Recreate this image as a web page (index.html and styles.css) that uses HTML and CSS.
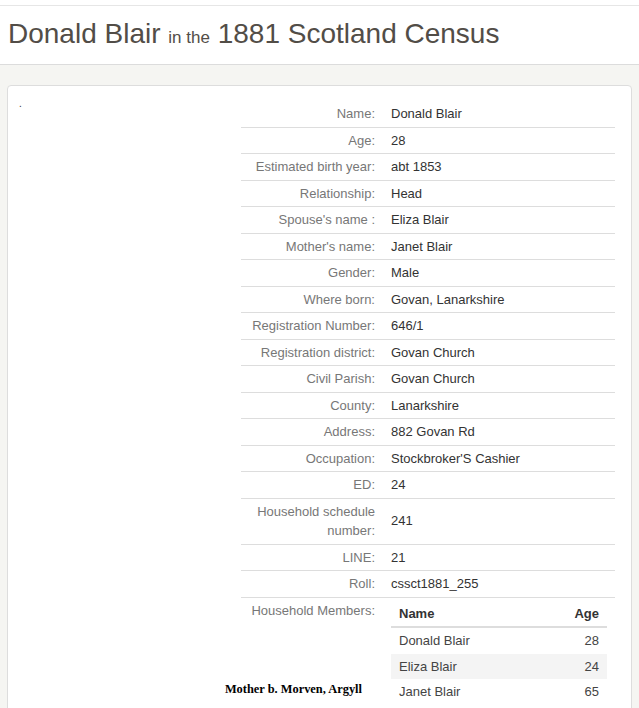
FILE: index.html
```html
<!DOCTYPE html>
<html lang="en">
<head>
<meta charset="utf-8">
<title>Donald Blair in the 1881 Scotland Census</title>
<link rel="stylesheet" href="styles.css">
</head>
<body>
<header class="page-header">
  <h1 class="title">Donald Blair <small class="title-small">in the</small> 1881 Scotland Census</h1>
</header>
<main class="main">
  <section class="card">
    <div class="side"><div class="dot">.</div></div>
    <table class="record">
      <tbody>
        <tr><td class="lbl">Name:</td><td class="val">Donald Blair</td></tr>
        <tr><td class="lbl">Age:</td><td class="val">28</td></tr>
        <tr><td class="lbl">Estimated birth year:</td><td class="val">abt 1853</td></tr>
        <tr><td class="lbl">Relationship:</td><td class="val">Head</td></tr>
        <tr><td class="lbl">Spouse's name :</td><td class="val">Eliza Blair</td></tr>
        <tr><td class="lbl">Mother's name:</td><td class="val">Janet Blair</td></tr>
        <tr><td class="lbl">Gender:</td><td class="val">Male</td></tr>
        <tr><td class="lbl">Where born:</td><td class="val">Govan, Lanarkshire</td></tr>
        <tr><td class="lbl">Registration Number:</td><td class="val">646/1</td></tr>
        <tr><td class="lbl">Registration district:</td><td class="val">Govan Church</td></tr>
        <tr><td class="lbl">Civil Parish:</td><td class="val">Govan Church</td></tr>
        <tr><td class="lbl">County:</td><td class="val">Lanarkshire</td></tr>
        <tr><td class="lbl">Address:</td><td class="val">882 Govan Rd</td></tr>
        <tr><td class="lbl">Occupation:</td><td class="val">Stockbroker'S Cashier</td></tr>
        <tr><td class="lbl">ED:</td><td class="val">24</td></tr>
        <tr><td class="lbl">Household schedule number:</td><td class="val">241</td></tr>
        <tr><td class="lbl">LINE:</td><td class="val">21</td></tr>
        <tr><td class="lbl">Roll:</td><td class="val">cssct1881_255</td></tr>
        <tr>
          <td class="lbl lbl-top">Household Members:<div class="note">Mother b. Morven, Argyll</div></td>
          <td class="val val-nested">
            <table class="members">
              <thead>
                <tr><th class="m-name">Name</th><th class="m-age">Age</th></tr>
              </thead>
              <tbody>
                <tr><td class="m-name">Donald Blair</td><td class="m-age">28</td></tr>
                <tr class="striped"><td class="m-name">Eliza Blair</td><td class="m-age">24</td></tr>
                <tr><td class="m-name">Janet Blair</td><td class="m-age">65</td></tr>
              </tbody>
            </table>
          </td>
        </tr>
      </tbody>
    </table>
  </section>
</main>
</body>
</html>
```

FILE: styles.css
```css
html, body {
  margin: 0;
  padding: 0;
  background: #ffffff;
  font-family: "Liberation Sans", Arial, sans-serif;
}

body {
  padding-top: 5px;
}

.page-header {
  border-top: 1px solid #e6e6e6;
  border-bottom: 1px solid #dcdcdc;
  padding: 12px 8px 15px;
  background: #ffffff;
}

.title {
  margin: 0;
  font-size: 28px;
  line-height: 31px;
  font-weight: normal;
  color: #524d47;
  white-space: nowrap;
}

.title-small {
  font-size: 17px;
  line-height: 1;
}

.main {
  background: #f5f5f2;
  padding: 20px 7px 40px;
}

.card {
  display: flex;
  background: #ffffff;
  border: 1px solid #dddddd;
  border-radius: 4px;
  padding: 15px 16px 20px 11px;
}

.side {
  flex: 1;
}

.dot {
  font-size: 10px;
  line-height: 10px;
  margin-top: -2px;
  color: #333;
}

.record {
  width: 374px;
  border-collapse: collapse;
  font-size: 13px;
  line-height: 19.5px;
}

.record td {
  padding: 3px 0;
  vertical-align: middle;
}

.record tr + tr td {
  border-top: 1px solid #dddddd;
}

.lbl {
  width: 134px;
  padding-right: 6px !important;
  text-align: right;
  color: #777777;
}

.lbl-top {
  vertical-align: top !important;
}

.val {
  padding-left: 10px !important;
  color: #333333;
}

.val-nested {
  vertical-align: top !important;
  padding-right: 8px !important;
}

.note {
  margin-top: 61px;
  margin-left: -20px;
  margin-right: 13px;
  text-align: right;
  white-space: nowrap;
  font-family: "Liberation Serif", "Times New Roman", serif;
  font-weight: bold;
  font-size: 12.4px;
  line-height: 16px;
  color: #000000;
}

.members {
  width: 216px;
  border-collapse: collapse;
  font-size: 13px;
  line-height: 19.5px;
}

.members th,
.members td {
  padding: 3px 8px;
  border: none !important;
}

.members th {
  font-weight: bold;
  color: #333333;
  border-bottom: 2px solid #dddddd !important;
}

.members td {
  color: #444444;
}

.members .m-name {
  text-align: left;
}

.members .m-age {
  text-align: right;
}

.members .striped td {
  background: #f4f4f4;
}
```
